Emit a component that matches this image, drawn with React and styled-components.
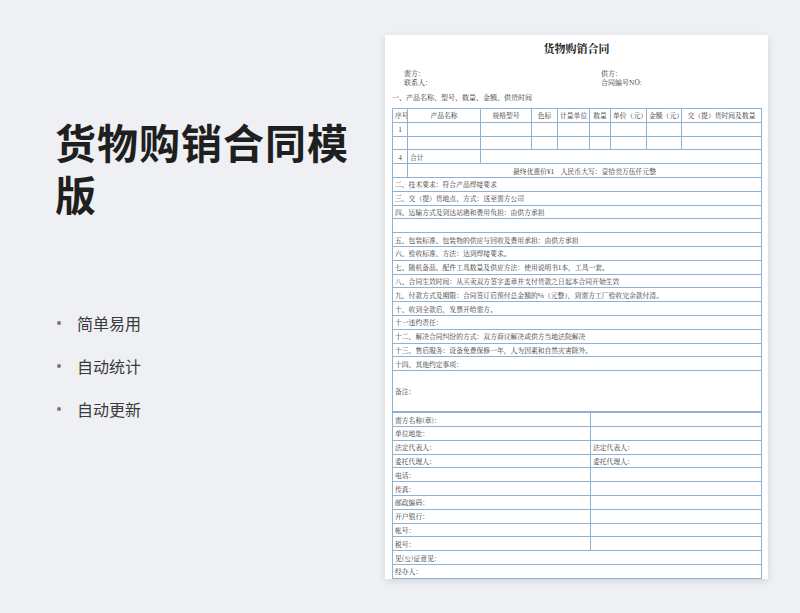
import React from "react";
import styled, { createGlobalStyle } from "styled-components";

const Global = createGlobalStyle`
  html, body { margin: 0; padding: 0; }
  body { background: #eef0f3; font-family: "Noto Sans CJK SC", "Noto Sans", sans-serif; }
`;

const Page = styled.div`
  width: 800px; height: 613px; overflow: hidden;
  display: flex; background: #eef0f3;
`;
const Left = styled.div`
  width: 385px; box-sizing: border-box; padding: 115px 0 0 55px;
  display: flex; flex-direction: column;
`;
const Title = styled.h1`
  margin: 0; font-size: 41px; line-height: 52px; font-weight: 700; color: #1f1f1f;
  width: 300px; letter-spacing: 1px;
`;
const List = styled.ul`
  margin: 91px 0 0 0; padding: 0; list-style: none;
  display: flex; flex-direction: column; gap: 17px;
`;
const Item = styled.li`
  font-size: 16px; line-height: 26px; color: #3a3a3a; display: flex; align-items: center;
  &::before { content: ""; width: 4px; height: 4px; border-radius: 50%; background: #777; margin: 0 16px 0 2px; }
`;
const Paper = styled.div`
  margin-top: 35px; width: 383px; height: 544px; background: #fff;
  box-shadow: 0 2px 8px rgba(0,0,0,0.12);
  padding: 6px 7px 0 7px; box-sizing: border-box; overflow: hidden;
  font-family: "Noto Serif CJK SC", "Noto Sans CJK SC", serif; color: #333;
`;
const DocTitle = styled.div`
  text-align: center; font-size: 11px; font-weight: 700; line-height: 14px; color: #222;
`;
const Parties = styled.div`
  display: grid; grid-template-columns: 197px 1fr; padding: 14px 0 0 12px;
  font-size: 7px; line-height: 9px;
`;
const Section = styled.div`
  font-size: 7px; line-height: 9px; margin: 6px 0 6px 0;
`;
const Table = styled.table`
  width: 369px; border-collapse: collapse; table-layout: fixed;
  font-size: 6.8px; color: #333; border: 1.5px solid #7fa6cf;
`;
const Cell = styled.td`
  border: 1px solid #8eb1d6; padding: 0 2px; white-space: nowrap; overflow: hidden;
  text-align: ${p => p.$align || "left"};
  height: ${p => p.$h || 12.8}px; line-height: 8px;
`;

const cols = [15, 73, 51, 26, 32, 21, 36, 35, 80];
const heads = ["序号", "产品名称", "规格型号", "色标", "计量单位", "数量", "单价（元）", "金额（元）", "交（提）货时间及数量"];
const terms = [
  "二、技术要求：符合产品焊接要求",
  "三、交（提）货地点、方式：送至需方公司",
  "四、运输方式及到达站港和费用负担：由供方承担",
  "",
  "五、包装标准、包装物的供应与回收及费用承担：由供方承担",
  "六、验收标准、方法：达到焊接要求。",
  "七、随机备品、配件工具数量及供应方法：使用说明书1本，工具一套。",
  "八、合同生效时间：从买卖双方签字盖章并支付货款之日起本合同开始生效",
  "九、付款方式及期限：合同签订后预付总金额的%（元整），到需方工厂验收完余款付清。",
  "十、收到全款后，发票开给需方。",
  "十一违约责任：",
  "十二、解决合同纠纷的方式：双方商议解决或供方当地法院解决",
  "十三、售后服务：设备免费保修一年，人为因素和自然灾害除外。",
  "十四、其他约定事项：",
];
const sign = [
  ["需方名称(章)：", ""], ["单位地址：", ""], ["法定代表人：", "法定代表人："],
  ["委托代理人：", "委托代理人："], ["电话：", ""], ["传真：", ""], ["邮政编码：", ""],
  ["开户银行：", ""], ["帐号：", ""], ["税号：", ""],
];

export default function App() {
  return (
    <Page>
      <Global />
      <Left>
        <Title>货物购销合同模版</Title>
        <List>
          <Item>简单易用</Item>
          <Item>自动统计</Item>
          <Item>自动更新</Item>
        </List>
      </Left>
      <Paper>
        <DocTitle>货物购销合同</DocTitle>
        <Parties>
          <span>需方：</span><span>供方：</span>
          <span>联系人：</span><span>合同编号NO:</span>
        </Parties>
        <Section>一、产品名称、型号、数量、金额、供货时间</Section>
        <Table>
          <colgroup>{cols.map((w, i) => <col key={i} style={{ width: w }} />)}</colgroup>
          <tbody>
            <tr>{heads.map((h, i) => <Cell key={i} $align="center">{h}</Cell>)}</tr>
            <tr>{cols.map((_, i) => <Cell key={i} $align="center">{i === 0 ? "1" : ""}</Cell>)}</tr>
            <tr>{cols.map((_, i) => <Cell key={i} />)}</tr>
            <tr><Cell $align="center">4</Cell><Cell>合计</Cell><Cell colSpan={7} /></tr>
            <tr><Cell /><Cell colSpan={8} $align="center">最终优惠价¥1　人民币大写：壹拾叁万伍仟元整</Cell></tr>
            {terms.map((t, i) => <tr key={i}><Cell colSpan={9}>{t}</Cell></tr>)}
            <tr><Cell colSpan={9} $h={40}>备注：</Cell></tr>
          </tbody>
        </Table>
        <Table style={{ borderTop: "none" }}>
          <colgroup><col style={{ width: 198 }} /><col style={{ width: 171 }} /></colgroup>
          <tbody>
            {sign.map(([a, b], i) => <tr key={i}><Cell>{a}</Cell><Cell>{b}</Cell></tr>)}
            <tr><Cell colSpan={2}>见(公)证意见：</Cell></tr>
            <tr><Cell colSpan={2}>经办人：</Cell></tr>
          </tbody>
        </Table>
      </Paper>
    </Page>
  );
}
